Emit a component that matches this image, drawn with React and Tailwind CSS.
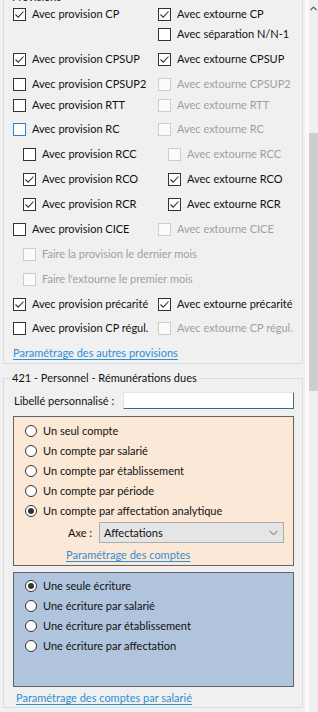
import React from 'react';

const font = "font-['Lato','Liberation_Sans',sans-serif] text-[11px] leading-[16px]";

const Box = ({ checked, disabled, focus }) => {
  let border = 'border-[#333333] bg-white';
  if (disabled) border = 'border-[#cccccc] bg-[#fbfbfb]';
  else if (focus) border = 'border-[#2f80c8] bg-white';
  return (
    <span className={`flex h-[13px] w-[13px] shrink-0 items-center justify-center border ${border}`}>
      {checked && (
        <svg width="11" height="11" viewBox="0 0 11 11">
          <path d="M1.5 5.5 L4.2 8.2 L9.5 2.5" fill="none" stroke="#333333" strokeWidth="1.1" />
        </svg>
      )}
    </span>
  );
};

const Check = ({ label, checked, disabled, focus }) => (
  <label className="flex items-center gap-[6px] whitespace-nowrap">
    <Box checked={checked} disabled={disabled} focus={focus} />
    <span className={disabled ? 'text-[#a0a0a0]' : 'text-[#111111]'}>{label}</span>
  </label>
);

const Radio = ({ label, selected }) => (
  <label className="flex h-[20px] items-center gap-[6px] whitespace-nowrap">
    <span className="flex h-[12px] w-[12px] shrink-0 items-center justify-center rounded-full border border-[#333333] bg-white">
      {selected && <span className="h-[6px] w-[6px] rounded-full bg-[#333333]" />}
    </span>
    <span className="text-[#111111]">{label}</span>
  </label>
);

const Link = ({ children }) => (
  <span className="whitespace-nowrap text-[#2f8fd3] underline underline-offset-2 decoration-[#2f8fd3]">{children}</span>
);

const rows = [
  { mt: '', left: { label: 'Avec provision CP', checked: true }, right: { label: 'Avec extourne CP', checked: true } },
  { mt: '', left: null, right: { label: 'Avec séparation N/N-1' } },
  { mt: 'mt-[5px]', left: { label: 'Avec provision CPSUP', checked: true }, right: { label: 'Avec extourne CPSUP', checked: true } },
  { mt: 'mt-[5px]', left: { label: 'Avec provision CPSUP2' }, right: { label: 'Avec extourne CPSUP2', disabled: true } },
  { mt: 'mt-[1px]', left: { label: 'Avec provision RTT' }, right: { label: 'Avec extourne RTT', disabled: true } },
  { mt: 'mt-[4px]', left: { label: 'Avec provision RC', focus: true }, right: { label: 'Avec extourne RC', disabled: true } },
  { mt: 'mt-[5px]', indent: true, left: { label: 'Avec provision RCC' }, right: { label: 'Avec extourne RCC', disabled: true } },
  { mt: 'mt-[5px]', indent: true, left: { label: 'Avec provision RCO', checked: true }, right: { label: 'Avec extourne RCO', checked: true } },
  { mt: 'mt-[5px]', indent: true, left: { label: 'Avec provision RCR', checked: true }, right: { label: 'Avec extourne RCR', checked: true } },
  { mt: 'mt-[5px]', left: { label: 'Avec provision CICE' }, right: { label: 'Avec extourne CICE', disabled: true } },
  { mt: 'mt-[5px]', indent: true, left: { label: 'Faire la provision le dernier mois', disabled: true }, right: null },
  { mt: 'mt-[5px]', indent: true, left: { label: "Faire l'extourne le premier mois", disabled: true }, right: null },
  { mt: 'mt-[5px]', left: { label: 'Avec provision précarité', checked: true }, right: { label: 'Avec extourne précarité', checked: true } },
  { mt: 'mt-[4px]', left: { label: 'Avec provision CP régul.' }, right: { label: 'Avec extourne CP régul.', disabled: true } },
];

export default function App() {
  return (
    <div className={`flex h-[712px] w-[318px] overflow-hidden bg-[#f0f0f0] ${font}`}>
      <div className="w-[305px] shrink-0">
        {/* Provisions */}
        <fieldset className="ml-[3px] mt-[-9px] w-[300px] border border-[#dcdcdc]">
          <legend className="ml-[6px] px-[2px] leading-[12px] text-[#111111]">Provisions</legend>
          <div className="mt-[1px] flex flex-col pl-[9px]">
            {rows.map((r, i) => (
              <div key={i} className={`flex h-[20px] items-center ${r.mt} ${r.indent ? 'pl-[10px]' : ''}`}>
                <div className="w-[145px] shrink-0">{r.left && <Check {...r.left} />}</div>
                <div>{r.right && <Check {...r.right} />}</div>
              </div>
            ))}
            <div className="mt-[5px] flex h-[20px] items-center">
              <Link>Paramétrage des autres provisions</Link>
            </div>
          </div>
        </fieldset>

        {/* 421 */}
        <fieldset className="ml-[3px] mt-[8px] w-[300px] border border-[#dcdcdc]">
          <legend className="ml-[6px] px-[2px] leading-[12px] text-[#111111]">421 - Personnel - Rémunérations dues</legend>
          <div className="flex flex-col pl-[9px]">
            <div className="mt-[8px] flex h-[17px] items-center">
              <span className="ml-[1px] w-[109px] whitespace-nowrap text-[#111111]">Libellé personnalisé :</span>
              <input
                type="text"
                className="h-[17px] w-[171px] border border-t-[#e3e3e3] border-l-[#e3e3e3] border-b-[#3f6a86] border-r-[#3f6a86] bg-white outline-none"
              />
            </div>

            <div className="mt-[7px] flex h-[150px] w-[281px] flex-col border border-[#646464] bg-[#fce8d6] pl-[11px] pt-[4px]">
              <Radio label="Un seul compte" />
              <Radio label="Un compte par salarié" />
              <Radio label="Un compte par établissement" />
              <Radio label="Un compte par période" />
              <Radio label="Un compte par affectation analytique" selected />
              <div className="mt-[1px] flex h-[21px] items-center">
                <span className="ml-[43px] w-[31px] whitespace-nowrap text-[#111111]">Axe :</span>
                <div className="flex h-[21px] w-[185px] items-center justify-between border border-[#acacac] bg-[#e5e5e5] pl-[4px] pr-[5px]">
                  <span className="text-[#111111]">Affectations</span>
                  <svg width="9" height="6" viewBox="0 0 9 6">
                    <path d="M0.5 0.8 L4.5 4.8 L8.5 0.8" fill="none" stroke="#606060" strokeWidth="1" />
                  </svg>
                </div>
              </div>
              <div className="mt-[2px] flex h-[20px] items-center pl-[41px]">
                <Link>Paramétrage des comptes</Link>
              </div>
            </div>

            <div className="mt-[6px] flex h-[115px] w-[281px] flex-col border border-[#646464] bg-[#b0c4de] pl-[11px] pt-[3px]">
              <Radio label="Une seule écriture" selected />
              <Radio label="Une écriture par salarié" />
              <Radio label="Une écriture par établissement" />
              <Radio label="Une écriture par affectation" />
            </div>

            <div className="mt-[2px] flex h-[18px] items-center pl-[3px]">
              <Link>Paramétrage des comptes par salarié</Link>
            </div>
          </div>
        </fieldset>
      </div>

      <div className="w-[4px] shrink-0 bg-[#fafafa]" />

      {/* scrollbar */}
      <div className="flex w-[9px] shrink-0 flex-col bg-[#f0f0f0]">
        <div className="flex h-[17px] items-center justify-center">
          <svg width="7" height="5" viewBox="0 0 7 5">
            <path d="M0.5 4 L3.5 1 L6.5 4" fill="none" stroke="#606060" strokeWidth="1.2" />
          </svg>
        </div>
        <div className="mt-[116px] h-[258px] bg-[#cdcdcd]" />
      </div>
    </div>
  );
}
